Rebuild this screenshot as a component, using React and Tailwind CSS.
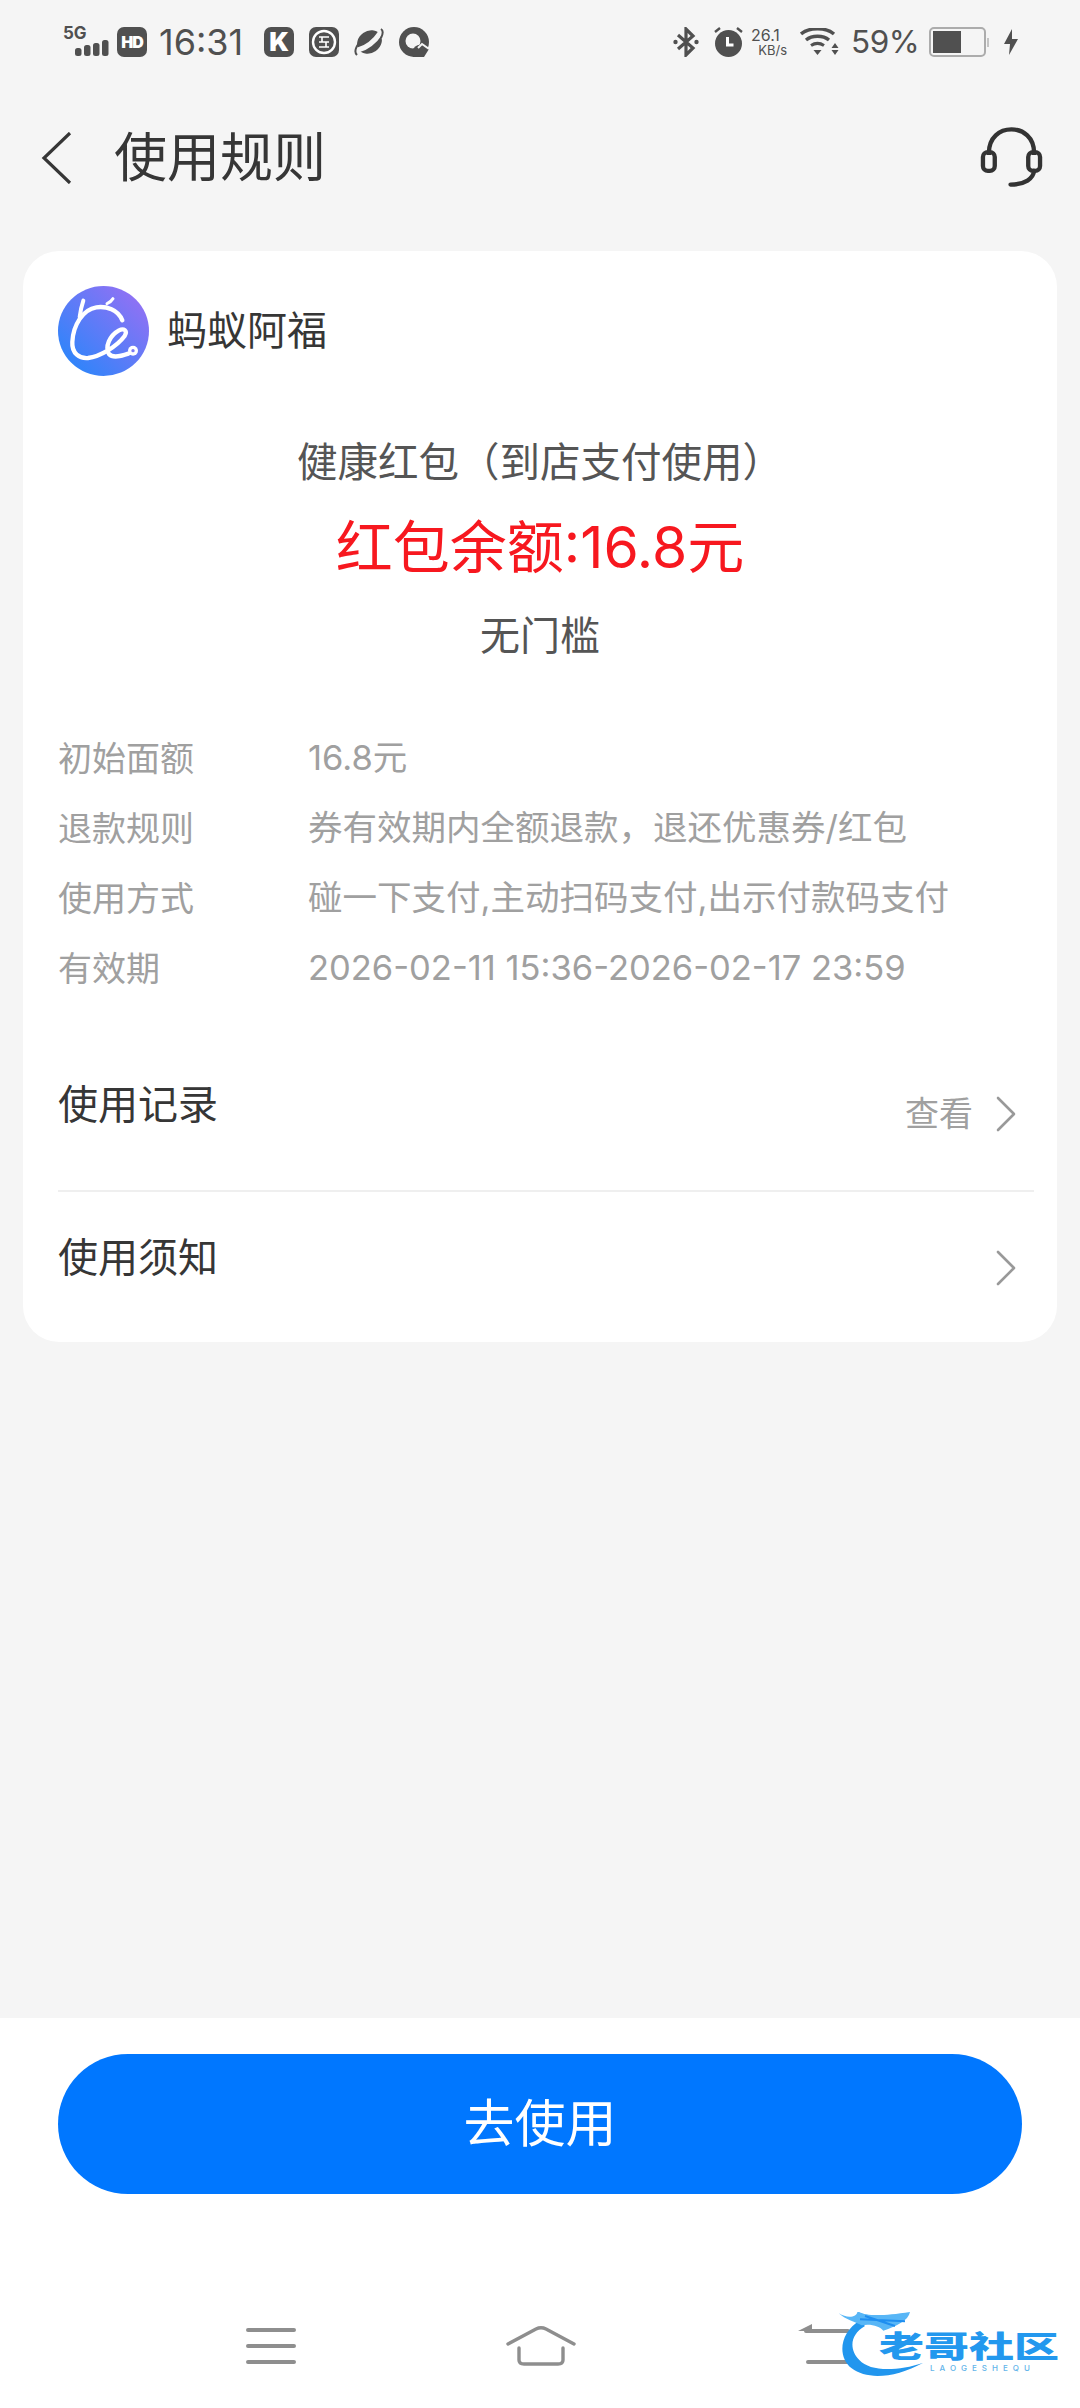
import React from "react";

const font = { fontFamily: 'Inter, "Noto Sans CJK SC", sans-serif' };

function Chevron({ className }) {
  return (
    <svg className={className} width="22" height="36" viewBox="0 0 22 36" fill="none">
      <path d="M3 2 L19 18 L3 34" stroke="#999" strokeWidth="2.6" strokeLinecap="round" strokeLinejoin="round" />
    </svg>
  );
}

function Badge({ children }) {
  return <div className="w-[30px] h-[30px] rounded-[7px] bg-[#505050] flex items-center justify-center">{children}</div>;
}

function StatusLeft() {
  return (
    <div className="flex items-center">
      <div className="relative w-[47px] h-[32px]">
        <span className="absolute left-0 top-[-2px] text-[17px] leading-[18px] font-bold text-[#505050]">5G</span>
        <svg className="absolute left-0 top-0" width="47" height="32" viewBox="0 0 47 32">
          <rect x="12" y="22" width="6.5" height="8" rx="2.5" fill="#505050" />
          <rect x="21" y="19" width="6.5" height="11" rx="2.5" fill="#505050" />
          <rect x="30" y="17" width="6.5" height="13" rx="2.5" fill="#505050" />
          <rect x="39" y="14" width="6.5" height="16" rx="2.5" fill="#505050" />
        </svg>
      </div>
      <div className="ml-[7px] w-[30px] h-[30px] rounded-[7px] bg-[#505050] flex items-center justify-center text-white text-[16px] font-black leading-none tracking-[-1px]">HD</div>
      <span className="ml-[12px] text-[36px] leading-[40px] text-[#505050] w-[90px] whitespace-nowrap">16:31</span>
      <div className="ml-[15px] flex items-center gap-[15px]">
        <Badge><span className="text-white font-black text-[26px] leading-none">K</span></Badge>
        <Badge>
          <svg width="26" height="26" viewBox="0 0 26 26" fill="none" stroke="#fff">
            <circle cx="13" cy="13" r="11" strokeWidth="2.4" />
            <path d="M8 8h10M8 13h10M8 18h10M11 8v5M15 13v5" strokeWidth="1.6" />
          </svg>
        </Badge>
        <svg width="30" height="30" viewBox="0 0 30 30">
          <ellipse cx="15.5" cy="15" rx="13" ry="11" transform="rotate(-35 15.5 15)" fill="#505050" />
          <path d="M4 23 C12 21 21 14 27 5" fill="none" stroke="#f5f5f5" strokeWidth="5" />
          <path d="M3 28 C0 25 2 20 5 16 M27 2 C30 4 29 7 27 11" fill="none" stroke="#505050" strokeWidth="2" />
        </svg>
        <svg width="30" height="30" viewBox="0 0 30 30">
          <circle cx="15" cy="15" r="15" fill="#505050" />
          <circle cx="14" cy="14" r="7.5" fill="#f5f5f5" />
          <path d="M13 24 C16 17 22 15 30 22 L25 30 L14 30 Z" fill="#505050" />
          <path d="M19 21 l4 -4 l7 5" fill="none" stroke="#f5f5f5" strokeWidth="2" />
        </svg>
      </div>
    </div>
  );
}

function StatusRight() {
  return (
    <div className="flex items-center">
      <svg width="26" height="30" viewBox="0 0 26 30" fill="none">
        <path d="M5 8 L20 21 L13 28 V2 L20 9 L5 22" stroke="#505050" strokeWidth="3.2" />
        <circle cx="2.5" cy="15" r="2.2" fill="#505050" />
        <circle cx="23.5" cy="15" r="2.2" fill="#505050" />
      </svg>
      <svg className="ml-[15px]" width="29" height="30" viewBox="0 0 29 30" fill="none">
        <circle cx="14.5" cy="16.5" r="13.5" fill="#505050" />
        <path d="M13.5 10v8h6" stroke="#fff" strokeWidth="3" />
        <path d="M1 5 L6 1 M28 5 L23 1" stroke="#505050" strokeWidth="2.4" />
      </svg>
      <div className="ml-[8px] w-[36px] flex flex-col items-end text-[#505050]">
        <span className="text-[16px] leading-[15px] self-start">26.1</span>
        <span className="text-[13px] leading-[14px]">KB/s</span>
      </div>
      <svg className="ml-[13px]" width="39" height="28" viewBox="0 0 39 28" fill="none">
        <path d="M1 6 C9 -1 26 -1 34 6" stroke="#505050" strokeWidth="3.4" />
        <path d="M6 12 C12 7 23 7 29 12" stroke="#505050" strokeWidth="3.4" />
        <path d="M11 17.5 C15 15 20 15 24 17.5" stroke="#505050" strokeWidth="3.2" />
        <path d="M13.5 22 H21.5 L17.5 27 Z" fill="#505050" />
        <path d="M35 15 L38.5 20 H31.5 Z M31.5 22 H38.5 L35 27 Z" fill="#505050" />
      </svg>
      <span className="ml-[12px] w-[65px] text-[31.5px] leading-[40px] text-[#505050] tracking-[-0.5px] whitespace-nowrap">59%</span>
      <div className="ml-[13px] w-[57px] h-[30px] rounded-[5px] border-[2px] border-[#acacac] p-[2px]">
        <div className="w-[28px] h-full bg-[#505050]" />
      </div>
      <div className="ml-[1px] w-[2px] h-[9px] bg-[#c4c4c4]" />
      <svg className="ml-[15px]" width="14" height="26" viewBox="0 0 14 26">
        <path d="M8 0 L0 15 H6 L5 26 L14 10 H8 Z" fill="#505050" />
      </svg>
    </div>
  );
}

function Logo() {
  return (
    <svg className="shrink-0" width="91" height="90" viewBox="25 22 273 270">
      <defs>
        <linearGradient id="ag" x1="0" y1="1" x2="1" y2="0">
          <stop offset="0" stopColor="#1e88fb" />
          <stop offset="1" stopColor="#a06ef3" />
        </linearGradient>
      </defs>
      <ellipse cx="161.5" cy="157" rx="136.5" ry="135" fill="url(#ag)" />
      <g fill="none" stroke="#fff" strokeLinecap="round" strokeLinejoin="round">
        <path strokeWidth="13" d="M218 125 C205 92 170 82 140 86 C100 92 70 140 68 190 C66 225 90 240 115 238 C150 234 200 205 225 172 C235 155 222 148 208 155 C180 170 165 205 178 226 C190 240 215 232 236 225" />
        <path strokeWidth="12" d="M101 66 C99 72 93 90 90 115" />
        <path strokeWidth="9" d="M190 60 C185 68 180 72 172 75" />
      </g>
      <circle cx="250" cy="216" r="15" fill="#fff" />
      <circle cx="250" cy="216" r="5" fill="#7c7bf5" />
    </svg>
  );
}

function InfoRow({ label, value }) {
  return (
    <div className="flex items-center h-[70px]">
      <span className="w-[250px] shrink-0 text-[34px] text-[#a0a0a0]">{label}</span>
      <span className="text-[34.5px] text-[#a0a0a0] whitespace-nowrap">{value}</span>
    </div>
  );
}

function Watermark() {
  return (
    <div className="absolute left-[837px] top-[1px] w-[225px] h-[66px]">
      <svg className="absolute left-0 top-0" width="225" height="66" viewBox="171 36 675 198">
        <path d="M240 62 C180 95 170 170 215 205 C260 240 345 235 430 188 C350 215 270 215 238 180 C208 150 208 105 255 78 Z" fill="#2196ee" />
        <path d="M176 40 C205 58 235 50 232 32 C250 48 300 50 390 36 C385 62 350 78 310 92 C300 78 270 70 245 76 C225 66 195 58 176 40 Z" fill="#58b6f6" />
        <path d="M240 58 L375 64 M255 48 L345 78" stroke="#1f8ef0" strokeWidth="6" fill="none" />
      </svg>
      <span className="absolute left-[42px] top-[9px] whitespace-nowrap text-[45px] leading-[50px] font-black text-[#2398ee] scale-y-[0.66]">老哥社区</span>
      <span className="absolute left-[93px] top-[51px] whitespace-nowrap text-[8px] leading-[10px] font-medium text-[#64b5ea] tracking-[5px]">LAOGESHEQU</span>
    </div>
  );
}

export default function App() {
  return (
    <div className="w-[1080px] h-[2408px] bg-[#f5f5f5] flex flex-col overflow-hidden" style={font}>
      <div className="h-[84px] pl-[63px] pr-[62px] flex items-center justify-between shrink-0">
        <StatusLeft />
        <StatusRight />
      </div>
      <div className="h-[142px] flex items-center pl-[41px] pr-[37px] shrink-0">
        <svg className="mt-[6px]" width="31" height="52" viewBox="0 0 31 52" fill="none">
          <path d="M29 1 L3 26 L29 51" stroke="#363636" strokeWidth="3.2" />
        </svg>
        <h1 className="ml-[42px] mt-[5px] text-[53px] leading-[60px] text-[#363636]">使用规则</h1>
        <svg className="ml-auto mt-[5px]" width="63" height="62" viewBox="0 0 64 62" fill="none" stroke="#333" strokeWidth="4.4">
          <path d="M9 28 V26 C9 10 20 2 32 2 C44 2 55 10 55 26 V28" />
          <rect x="3" y="25" width="12" height="19" rx="5" />
          <rect x="49" y="25" width="12" height="19" rx="5" />
          <path d="M55 44 C54 52 46 58 31 58" strokeLinecap="round" />
        </svg>
      </div>
      <section className="mx-[23px] mt-[25px] h-[1091px] bg-white rounded-[36px] pt-[35px] pl-[35px] pr-[23px] shrink-0">
        <div className="flex items-center">
          <Logo />
          <span className="ml-[18px] text-[40px] leading-[50px] text-[#363636]">蚂蚁阿福</span>
        </div>
        <div className="flex flex-col items-center mr-[12px] mt-[62px]">
          <p className="text-[40.5px] leading-[50px] text-[#555]">健康红包（到店支付使用）</p>
          <p className="mt-[25px] text-[57px] leading-[70px] text-[#f7181f]">红包余额:16.8元</p>
          <p className="mt-[28px] text-[40px] leading-[50px] text-[#555]">无门槛</p>
        </div>
        <div className="mt-[62px]">
          <InfoRow label="初始面额" value="16.8元" />
          <InfoRow label="退款规则" value="券有效期内全额退款，退还优惠券/红包" />
          <InfoRow label="使用方式" value="碰一下支付,主动扫码支付,出示付款码支付" />
          <InfoRow label="有效期" value="2026-02-11 15:36-2026-02-17 23:59" />
        </div>
        <div className="mt-[49px] h-[140px] flex items-start border-b-[2px] border-[#efefef]">
          <span className="text-[40px] leading-[50px] text-[#363636] mt-[28px]">使用记录</span>
          <span className="ml-auto mt-[40px] text-[34px] leading-[44px] text-[#a0a0a0]">查看</span>
          <Chevron className="ml-[22px] mr-[17px] mt-[44px]" />
        </div>
        <div className="flex items-start">
          <span className="text-[40px] leading-[50px] text-[#363636] mt-[41px]">使用须知</span>
          <Chevron className="ml-auto mr-[17px] mt-[58px]" />
        </div>
      </section>
      <div className="flex-1" />
      <footer className="h-[390px] bg-white shrink-0 pt-[36px] flex flex-col items-center">
        <button className="w-[964px] h-[140px] rounded-[70px] bg-[#0077ff] text-white text-[51px]">去使用</button>
        <div className="relative w-full mt-[117px] h-[70px]">
          <div className="flex items-center h-full pl-[246px]">
            <svg width="50" height="36" viewBox="0 0 50 36" stroke="#8e8e8e" strokeWidth="4" strokeLinecap="round">
              <path d="M2 2 H48 M2 18 H48 M2 34 H48" />
            </svg>
            <svg className="ml-[210px]" width="70" height="40" viewBox="0 0 70 40" fill="none" stroke="#8e8e8e" strokeWidth="3.4" strokeLinecap="round" strokeLinejoin="round">
              <path d="M2 18 L30 3 C33 1.5 37 1.5 40 3 L68 18" />
              <path d="M13 22 V34 C13 37 15 38 18 38 H52 C55 38 57 37 57 34 V22" />
            </svg>
            <svg className="ml-[222px]" width="52" height="44" viewBox="0 0 52 44" fill="none" stroke="#8e8e8e" strokeWidth="4" strokeLinecap="round">
              <path d="M8 7 H50 M10 38 H50" />
              <path d="M14 0 L0 7 H14 Z" fill="#8e8e8e" stroke="none" />
            </svg>
          </div>
          <Watermark />
        </div>
      </footer>
    </div>
  );
}
